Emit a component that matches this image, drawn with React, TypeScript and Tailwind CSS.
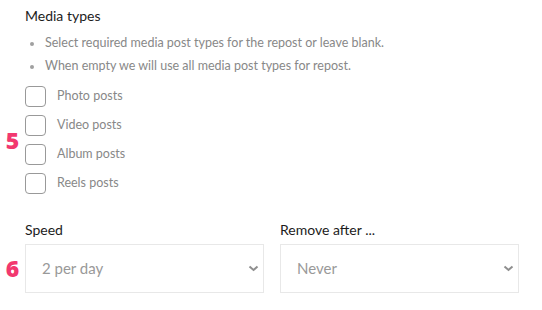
const mediaTypes = ["Photo posts", "Video posts", "Album posts", "Reels posts"];

const notes = [
  "Select required media post types for the repost or leave blank.",
  "When empty we will use all media post types for repost.",
];

function Chevron() {
  return (
    <svg width="11" height="7" viewBox="0 0 11 7" className="shrink-0">
      <path d="M1.5 1.5 L5.5 5 L9.5 1.5" fill="none" stroke="#8f8f8f" strokeWidth="2" />
    </svg>
  );
}

function SelectBox({ value }: { value: string }) {
  return (
    <div className="flex-1 h-[49px] border border-[#e8e8e8] bg-white flex items-center justify-between pl-[16px] pr-[4px]">
      <span className="text-[15px] text-[#999]">{value}</span>
      <Chevron />
    </div>
  );
}

export default function App() {
  return (
    <div
      className="w-[542px] h-[310px] bg-white pt-[6px] pr-[23px]"
      style={{ fontFamily: "Lato, 'Noto Sans', sans-serif" }}
    >
      {/* media types */}
      <div className="pl-[25px]">
        <h3 className="text-[14px] leading-[20px] text-[#1c1c1c]">Media types</h3>
        <ul className="mt-[6px]">
          {notes.map((n) => (
            <li key={n} className="flex items-center h-[23px] text-[12.5px] text-[#888]">
              <span className="w-[4px] h-[4px] rounded-full bg-[#a0a0a0] ml-[5px] mr-[11px]" />
              {n}
            </li>
          ))}
        </ul>
      </div>

      <div className="flex mt-[8px]">
        <div
          className="w-[25px] flex items-center justify-center text-[23px] font-extrabold text-[#f2386f]"
          style={{ fontFamily: "'Open Sans', sans-serif" }}
        >
          5
        </div>
        <div className="flex flex-col gap-[8px]">
          {mediaTypes.map((t) => (
            <label key={t} className="flex items-center h-[21px]">
              <span className="w-[21px] h-[21px] rounded-[4px] border border-[#999] bg-white" />
              <span className="ml-[11px] text-[12.5px] text-[#888]">{t}</span>
            </label>
          ))}
        </div>
      </div>

      {/* speed / remove after */}
      <div className="flex gap-[16px] pl-[25px] mt-[26px]">
        <div className="flex-1 text-[14px] leading-[20px] text-[#1c1c1c]">Speed</div>
        <div className="flex-1 text-[14px] leading-[20px] text-[#1c1c1c]">Remove after ...</div>
      </div>
      <div className="flex mt-[4px]">
        <div
          className="w-[25px] flex items-center justify-center text-[23px] font-extrabold text-[#f2386f]"
          style={{ fontFamily: "'Open Sans', sans-serif" }}
        >
          6
        </div>
        <div className="flex-1 flex gap-[16px]">
          <SelectBox value="2 per day" />
          <SelectBox value="Never" />
        </div>
      </div>
    </div>
  );
}
